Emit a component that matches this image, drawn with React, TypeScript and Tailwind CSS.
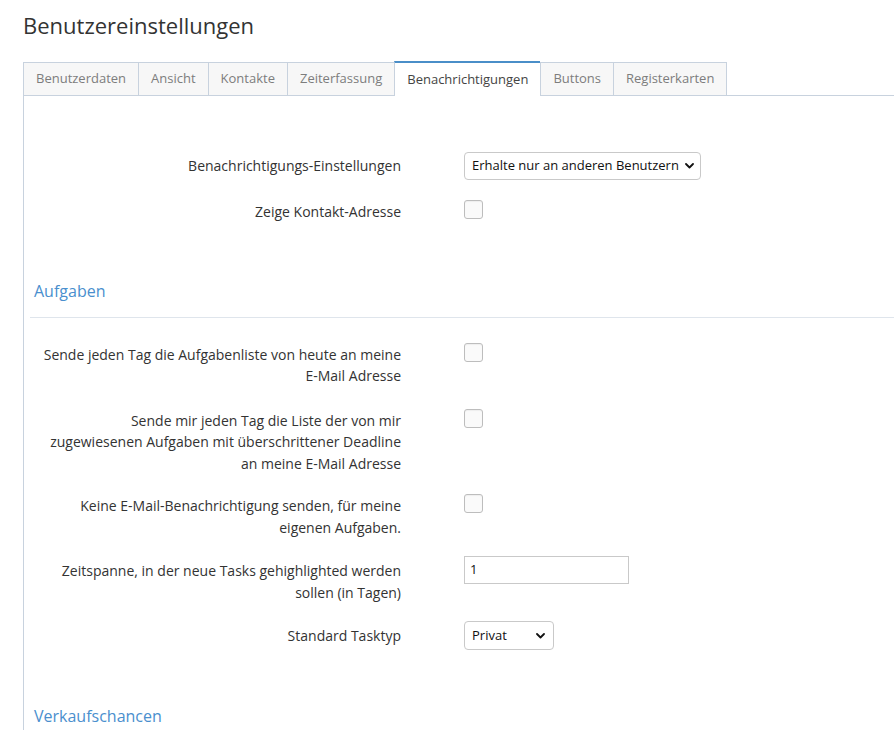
import React from "react";

const tabs = [
  "Benutzerdaten",
  "Ansicht",
  "Kontakte",
  "Zeiterfassung",
  "Benachrichtigungen",
  "Buttons",
  "Registerkarten",
];

function Chevron() {
  return (
    <svg width="9" height="6" viewBox="0 0 9 6" className="pointer-events-none">
      <path d="M1 1 L4.5 4.5 L8 1" fill="none" stroke="#111" strokeWidth="1.8" strokeLinecap="round" strokeLinejoin="round" />
    </svg>
  );
}

function FakeSelect({ value, width }: { value: string; width: string }) {
  return (
    <div className={`relative ${width} h-[28px] border border-[#c9c9c9] rounded-[4px] bg-white flex items-center pl-[7px] pr-[6px] justify-between`}>
      <span className="text-[13px] text-[#111] whitespace-nowrap">{value}</span>
      <Chevron />
    </div>
  );
}

function Checkbox() {
  return (
    <div className="w-[19px] h-[19px] rounded-[3px] border border-[#bdbdbd] bg-[#fafafa] shadow-[inset_0_1px_1px_rgba(0,0,0,0.05)]" />
  );
}

function Label({ lines, pt = "pt-0" }: { lines: string[]; pt?: string }) {
  return (
    <div className={`w-[377px] shrink-0 text-right text-[14px] leading-[21.5px] text-[#333] ${pt}`}>
      {lines.map((l, i) => (
        <div key={i} className="whitespace-nowrap">
          {l}
        </div>
      ))}
    </div>
  );
}

export default function App() {
  return (
    <div className="min-h-screen bg-white font-['Open_Sans',sans-serif] text-[#333] pl-[23px] overflow-hidden">
      <h1 className="pt-[10px] text-[22px] leading-[30px] font-normal text-[#333]">
        Benutzereinstellungen
      </h1>

      <div className="mt-[21px] flex items-end">
        {tabs.map((t, i) => {
          const active = t === "Benachrichtigungen";
          const last = i === tabs.length - 1;
          if (active) {
            return (
              <div
                key={t}
                className="relative z-10 -mb-px h-[35px] px-3 flex items-center bg-white border-l border-[#c8d2de] border-t-2 border-t-[#4a8ec8] text-[13px] text-[#444] whitespace-nowrap"
              >
                {t}
              </div>
            );
          }
          return (
            <div
              key={t}
              className={`h-[33px] px-3 flex items-center bg-[#f7f7f7] border-t border-l border-[#c8d2de] ${last ? "border-r" : ""} text-[13px] text-[#7d7d7d] whitespace-nowrap`}
            >
              {t}
            </div>
          );
        })}
      </div>

      <div className="border-t border-l border-[#c8d2de] pt-[56px] pb-[40px]">
        <div className="flex items-start mb-[20px]">
          <Label lines={["Benachrichtigungs-Einstellungen"]} pt="pt-[3px]" />
          <div className="ml-[63px]">
            <FakeSelect value="Erhalte nur an anderen Benutzern" width="w-[237px]" />
          </div>
        </div>
        <div className="flex items-start">
          <Label lines={["Zeige Kontakt-Adresse"]} pt="pt-px" />
          <div className="ml-[63px]">
            <Checkbox />
          </div>
        </div>

        <div className="mt-[57px] ml-[6px] pl-[4px] pb-[15px] border-b border-[#dfe5ec]">
          <div className="text-[16px] leading-[22px] text-[#4a8fce]">Aufgaben</div>
        </div>

        <div className="mt-[25px] flex items-start mb-[22px]">
          <Label lines={["Sende jeden Tag die Aufgabenliste von heute an meine", "E-Mail Adresse"]} pt="pt-px" />
          <div className="ml-[63px]">
            <Checkbox />
          </div>
        </div>

        <div className="flex items-start mb-[20px]">
          <Label
            lines={[
              "Sende mir jeden Tag die Liste der von mir",
              "zugewiesenen Aufgaben mit überschrittener Deadline",
              "an meine E-Mail Adresse",
            ]}
            pt="pt-px"
          />
          <div className="ml-[63px]">
            <Checkbox />
          </div>
        </div>

        <div className="flex items-start mb-[18px]">
          <Label lines={["Keine E-Mail-Benachrichtigung senden, für meine", "eigenen Aufgaben."]} pt="pt-px" />
          <div className="ml-[63px]">
            <Checkbox />
          </div>
        </div>

        <div className="flex items-start mb-[18px]">
          <Label lines={["Zeitspanne, in der neue Tasks gehighlighted werden", "sollen (in Tagen)"]} pt="pt-[4px]" />
          <div className="ml-[63px]">
            <div className="w-[165px] h-[28px] border border-[#c9c9c9] bg-white flex items-center pl-[5px] text-[13px] text-[#111]">
              1
            </div>
          </div>
        </div>

        <div className="flex items-start">
          <Label lines={["Standard Tasktyp"]} pt="pt-[4px]" />
          <div className="ml-[63px]">
            <div className="w-[90px] h-[29px] border border-[#c9c9c9] rounded-[4px] bg-white flex items-center pl-[7px] pr-[8px] justify-between">
              <span className="text-[13px] text-[#111]">Privat</span>
              <Chevron />
            </div>
          </div>
        </div>

        <div className="mt-[55px] ml-[6px] pl-[4px]">
          <div className="text-[16px] leading-[22px] text-[#4a8fce]">Verkaufschancen</div>
        </div>
      </div>
    </div>
  );
}
